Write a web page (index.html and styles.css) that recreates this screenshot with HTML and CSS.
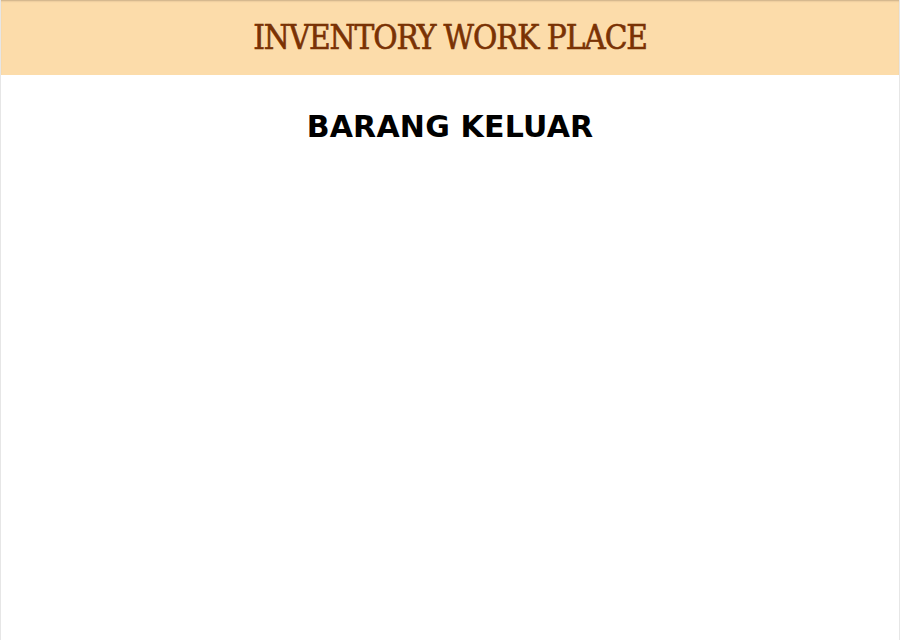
FILE: index.html
```html
<!DOCTYPE html>
<html>
<head>
<meta charset="utf-8">
<link rel="stylesheet" href="styles.css">
</head>
<body>
<div class="frame">
  <header class="topbar">
    <h1 class="brand">INVENTORY WORK PLACE</h1>
  </header>
  <main class="content">
    <h2 class="page-title">BARANG KELUAR</h2>
  </main>
</div>
</body>
</html>
```

FILE: styles.css
```css
html, body {
  margin: 0;
  padding: 0;
  height: 100%;
  background: #ffffff;
}
.frame {
  height: 640px;
  box-sizing: border-box;
  border-left: 1px solid #e6e6e6;
  border-right: 1px solid #e6e6e6;
  display: flex;
  flex-direction: column;
}
.topbar {
  height: 75px;
  background: #fcdcaa;
  box-shadow: inset 0 2px 2px -1px #c9ad85;
  display: flex;
  align-items: center;
  justify-content: center;
  flex: none;
}
.brand {
  margin: 0;
  font-family: "DejaVu Serif Condensed", "DejaVu Serif", serif;
  font-stretch: condensed;
  font-weight: normal;
  font-size: 33px;
  color: #7a3204;
  letter-spacing: -1.1px;
  -webkit-text-stroke: 0.6px #7a3204;
}
.content {
  flex: 1;
  display: flex;
  flex-direction: column;
  align-items: center;
  padding-top: 35px;
}
.page-title {
  margin: 0;
  font-family: "DejaVu Sans", Verdana, sans-serif;
  font-weight: bold;
  font-size: 30px;
  letter-spacing: 0.2px;
  color: #000;
  line-height: 1.1;
}
```
